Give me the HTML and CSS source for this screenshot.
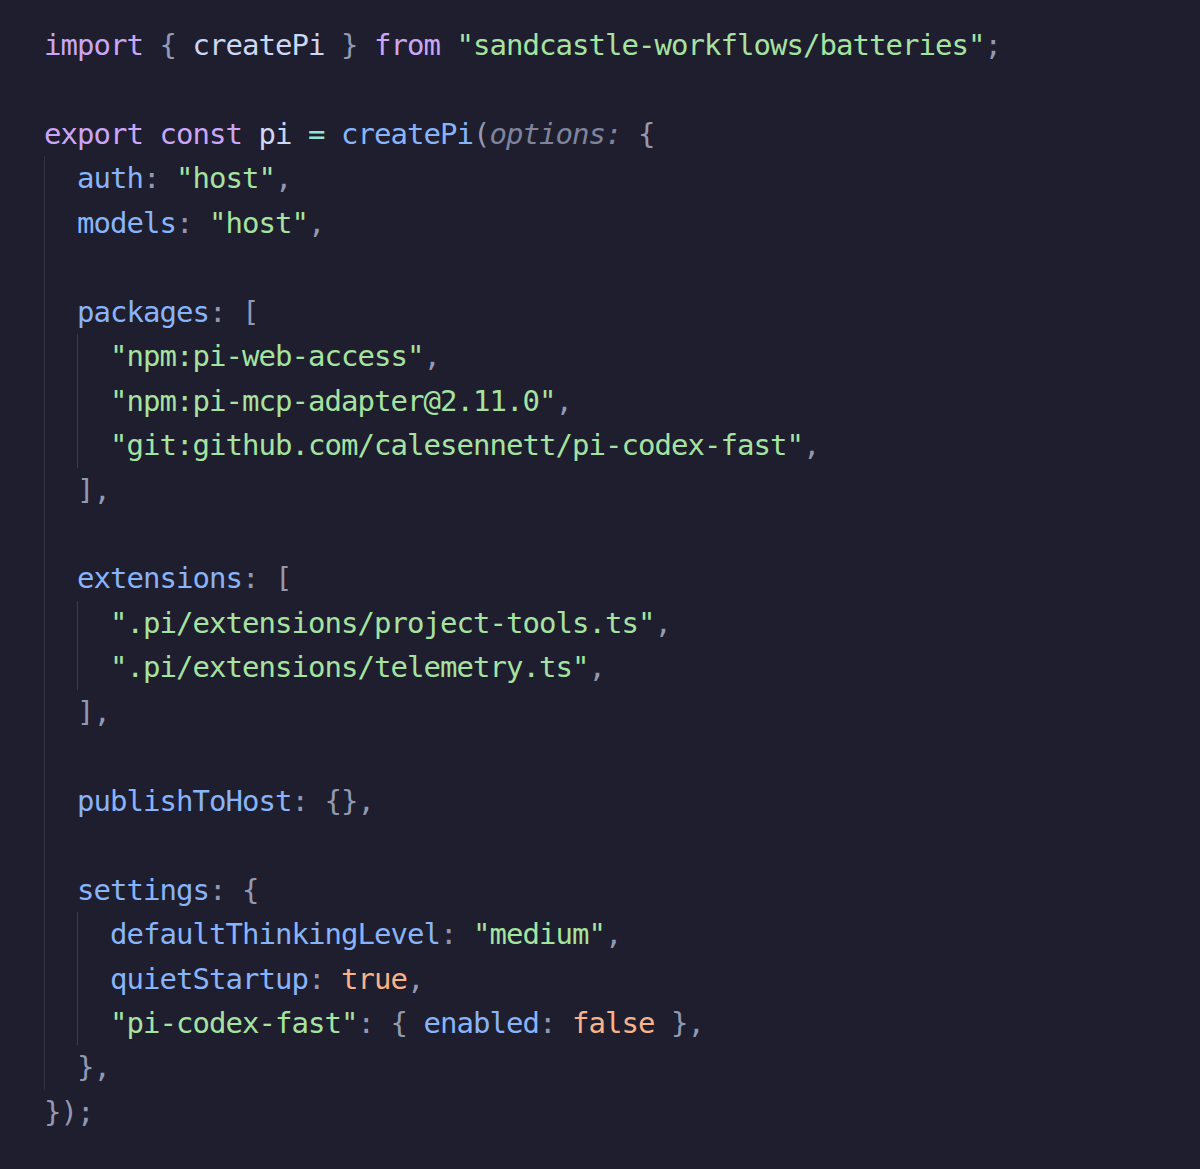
FILE: index.html
```html
<!DOCTYPE html>
<html lang="en">
<head>
<meta charset="utf-8">
<title>pi config</title>
<link rel="stylesheet" href="styles.css">
</head>
<body>
<pre class="code"><div class="ln"><span class="kw">import</span> <span class="pn">{</span> <span class="tx">createPi</span> <span class="pn">}</span> <span class="kw">from</span> <span class="st">"sandcastle-workflows/batteries"</span><span class="pn">;</span></div><div class="ln"></div><div class="ln"><span class="kw">export</span> <span class="kw">const</span> <span class="tx">pi</span> <span class="op">=</span> <span class="fn">createPi</span><span class="pn">(</span><span class="hint">options:</span> <span class="pn">{</span></div><div class="blk"><div class="ln"><span class="pr">auth</span><span class="pn">:</span> <span class="st">"host"</span><span class="pn">,</span></div><div class="ln"><span class="pr">models</span><span class="pn">:</span> <span class="st">"host"</span><span class="pn">,</span></div><div class="ln"></div><div class="ln"><span class="pr">packages</span><span class="pn">:</span> <span class="pn">[</span></div><div class="blk"><div class="ln"><span class="st">"npm:pi-web-access"</span><span class="pn">,</span></div><div class="ln"><span class="st">"npm:pi-mcp-adapter@2.11.0"</span><span class="pn">,</span></div><div class="ln"><span class="st">"git:github.com/calesennett/pi-codex-fast"</span><span class="pn">,</span></div></div><div class="ln"><span class="pn">],</span></div><div class="ln"></div><div class="ln"><span class="pr">extensions</span><span class="pn">:</span> <span class="pn">[</span></div><div class="blk"><div class="ln"><span class="st">".pi/extensions/project-tools.ts"</span><span class="pn">,</span></div><div class="ln"><span class="st">".pi/extensions/telemetry.ts"</span><span class="pn">,</span></div></div><div class="ln"><span class="pn">],</span></div><div class="ln"></div><div class="ln"><span class="pr">publishToHost</span><span class="pn">:</span> <span class="pn">{},</span></div><div class="ln"></div><div class="ln"><span class="pr">settings</span><span class="pn">:</span> <span class="pn">{</span></div><div class="blk"><div class="ln"><span class="pr">defaultThinkingLevel</span><span class="pn">:</span> <span class="st">"medium"</span><span class="pn">,</span></div><div class="ln"><span class="pr">quietStartup</span><span class="pn">:</span> <span class="bo">true</span><span class="pn">,</span></div><div class="ln"><span class="st">"pi-codex-fast"</span><span class="pn">:</span> <span class="pn">{</span> <span class="pr">enabled</span><span class="pn">:</span> <span class="bo">false</span> <span class="pn">},</span></div></div><div class="ln"><span class="pn">},</span></div></div><div class="ln"><span class="pn">});</span></div></pre>
</body>
</html>
```
FILE: styles.css
```css
html, body {
  margin: 0;
  padding: 0;
  background: #1e1e2e;
}
body {
  width: 1200px;
  height: 1169px;
  overflow: hidden;
}
.code {
  margin: 0;
  padding: 23px 0 0 44px;
  font-family: "DejaVu Sans Mono", "Liberation Mono", monospace;
  font-size: 29px;
  letter-spacing: -0.96px;
  line-height: 44.46px;
  color: #cdd6f4;
  white-space: pre;
}
.ln {
  height: 44.46px;
}
.blk {
  border-left: 1px solid #313244;
  padding-left: 32px;
}
.blk .blk {
  border-left-color: #3a3b4f;
}
.kw { color: #cba6f7; }
.tx { color: #cdd6f4; }
.fn { color: #89b4fa; }
.pr { color: #89b4fa; }
.st { color: #a6e3a1; }
.bo { color: #fab387; }
.op { color: #94e2d5; }
.pn { color: #9399b2; }
.hint { color: #7f849c; font-style: italic; }
```
